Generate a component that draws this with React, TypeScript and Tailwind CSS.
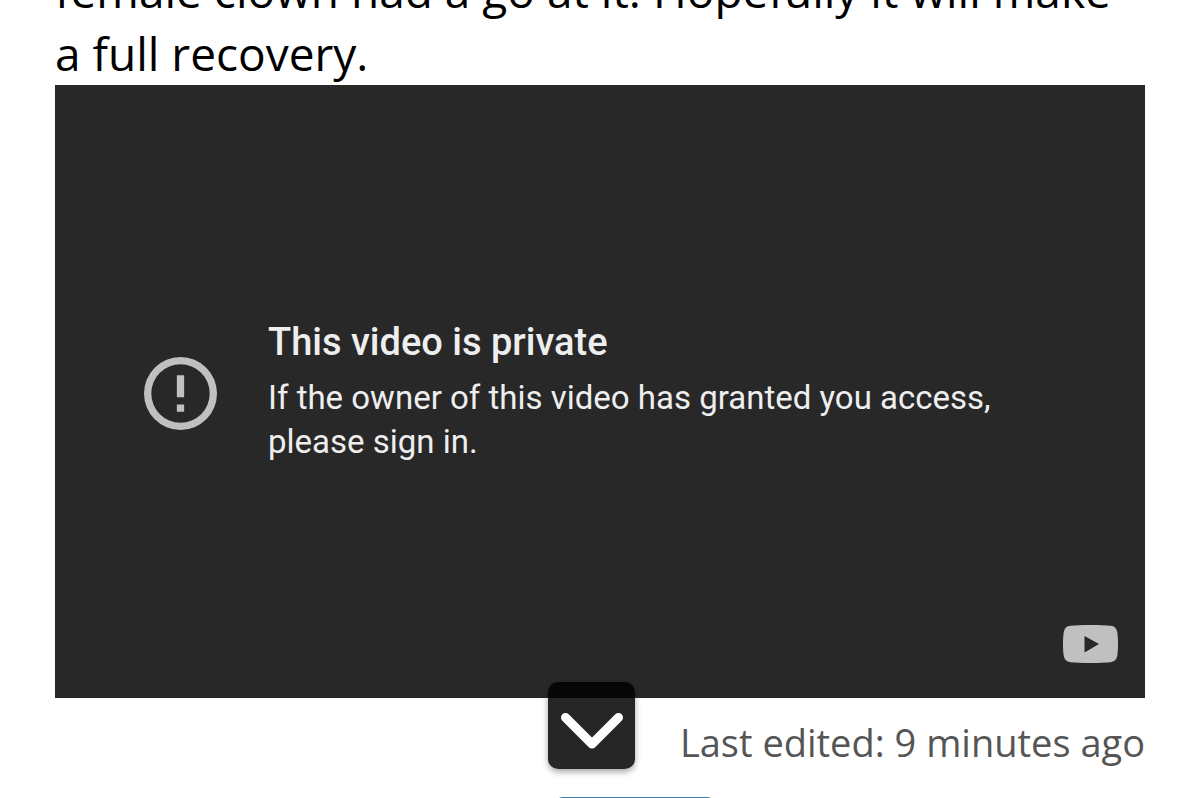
const POST_LINES = ['female clown had a go at it. Hopefully it will make', 'a full recovery.'];

/** Round exclamation mark shown next to the player error */
const ErrorIcon = () => (
  <svg viewBox="0 0 20 20" className="mt-1 size-[73px] shrink-0 fill-[#c0c0c0]" aria-hidden="true">
    <path d="M10 0a10 10 0 1 0 0 20a10 10 0 0 0 0-20zm0 18a8 8 0 1 1 0-16a8 8 0 0 1 0 16zM9 5h2v6H9zM9 13h2v2H9z" />
  </svg>
);

const PlayerLogo = () => (
  <svg viewBox="0 0 55 38" className="h-[38px] w-[55px]" aria-hidden="true">
    <path
      fill="#c0c0c0"
      fillRule="evenodd"
      d="M27.5 0C36 0 43 .3 47.5 .8C51.500 1.200 53.500 3.300 54.200 7C54.800 10.500 55 14.500 55 19S54.800 27.500 54.200 31C53.500 34.700 51.500 36.800 47.500 37.200C43 37.700 36 38 27.500 38S12 37.700 7.500 37.200C3.500 36.800 1.500 34.700 .8 31C.2 27.500 0 23.500 0 19S.2 10.500 .8 7C1.500 3.300 3.500 1.200 7.500 .8C12 .3 19 0 27.500 0zM21.500 11L36 19L21.500 27.500z"
    />
  </svg>
);

function PrivateVideo() {
  return (
    <section className="relative flex aspect-video w-full items-center bg-[#282828] px-[89px] font-['Roboto',sans-serif] text-[#eeeeee]">
      <ErrorIcon />
      <div className="ml-[51px] pb-1">
        <h2 className="text-[38px] leading-[52px] font-medium">This video is private</h2>
        <p className="mt-2 text-[33px] leading-[44px]">
          If the owner of this video has granted you access, please sign in.
        </p>
      </div>
      <a href="#watch" aria-label="Watch on YouTube" className="absolute right-[27px] bottom-[35px]">
        <PlayerLogo />
      </a>
    </section>
  );
}

export default function App() {
  return (
    <div className="relative h-screen overflow-hidden bg-white font-['Open_Sans',sans-serif]">
      <main className="px-[55px]">
        {/* The post is scrolled, so its first line is cut by the top edge */}
        <p className="-mt-[41px] text-[46px] leading-[63px] whitespace-nowrap text-black">
          {POST_LINES[0]}
          <br />
          {POST_LINES[1]}
        </p>
        <PrivateVideo />
        <p className="pt-[18px] text-right text-[38px] leading-[52px] text-[#555555]">
          Last edited: 9 minutes ago
        </p>
        <div className="mt-[29px] flex justify-center pl-[70px]">
          <button type="button" aria-label="Like" className="h-[60px] w-[160px] rounded-lg bg-[#3a7fb0]" />
        </div>
      </main>

      {/* Scroll down button floats over the page */}
      <button
        type="button"
        aria-label="Scroll down"
        className="absolute bottom-[29px] left-1/2 -ml-[52px] flex size-[87px] items-center justify-center rounded-[10px] bg-black/85 shadow-[0_3px_6px_rgba(0,0,0,0.35)]"
      >
        <svg viewBox="0 0 62 36" className="mt-[10px] h-[36px] w-[62px]" fill="none" aria-hidden="true">
          <path d="M4.500 4.500L31 31L57.500 4.500" stroke="white" strokeWidth="9" strokeLinecap="round" strokeLinejoin="round" />
        </svg>
      </button>
    </div>
  );
}
